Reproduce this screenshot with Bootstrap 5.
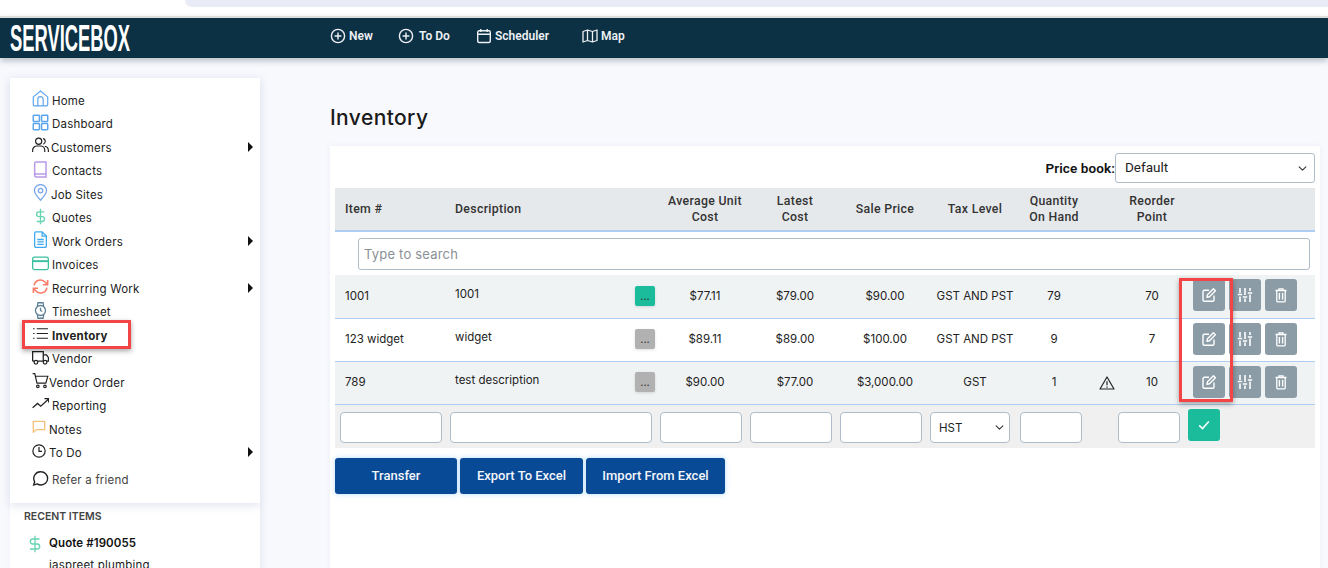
<!doctype html>
<html lang="en">
<head>
<meta charset="utf-8">
<title>Inventory</title>
<link href="https://cdn.jsdelivr.net/npm/bootstrap@5.3.0/dist/css/bootstrap.min.css" rel="stylesheet">
<style>
html,body{height:568px;overflow:hidden}
body{background:#f8f9fd;font-family:Inter,"Noto Sans",sans-serif;color:#222;font-size:11.5px}
.top-strip{height:16px;background:#fff;overflow:hidden}
.top-bubble{height:7px;margin-left:185px;background:#e9ecf6;border-bottom-left-radius:22px}
.sb-nav{height:42px;background:#0c3044;border-top:2px solid #dcdedb;padding:0;box-shadow:0 3px 6px rgba(40,60,80,.3);flex-wrap:nowrap;justify-content:flex-start}
.sb-logo{width:320px;padding:1px 0 0 10px;color:#fff;font:700 36px/40px "Liberation Sans",sans-serif;height:40px;flex:none}
.sb-logo span{display:inline-block;transform:scaleX(.51);transform-origin:left center}
.top-link{display:flex;align-items:center;gap:3px;color:#eef2f4;font:600 12px/16px Roboto,sans-serif;text-decoration:none;position:absolute;top:10px}
.top-link svg{width:16px;height:16px}
.gap-wide{margin-left:2px}
.shell{display:flex;align-items:flex-start}
.side-wrap{width:250px;margin:20px 0 0 10px;flex:none;position:relative}
.side-menu{background:#fff;padding:11.5px 0 11px 22px;box-shadow:0 2px 9px rgba(90,100,170,.2);height:425px;position:relative;z-index:1}
.side-item{display:flex;align-items:center;height:23.5px;color:#222;text-decoration:none;position:relative;gap:3px;font-size:11.5px;letter-spacing:.2px}
.side-item svg.ic{width:17px;height:17px;flex:none;margin-top:-5px}
.side-item svg.ic.small-ic{width:14px;height:14px;margin-top:-6px}
.side-item .caret-r{position:absolute;left:216px;top:5px;width:0;height:0;border-left:5px solid #111;border-top:5px solid transparent;border-bottom:5px solid transparent}
.side-item b{font-weight:700}
.tight{margin-left:-3px}
.tight1{margin-left:-1px}
.refer{margin-top:3.5px;color:#444}
.recent{background:#fff;padding:7px 0 0 14px;height:80px;box-shadow:2px 0 6px rgba(90,100,170,.1)}
.recent h6{font-size:10.5px;font-weight:600;color:#444;margin:0 0 13px;line-height:13px}
.recent-line{display:flex;gap:7px;align-items:center;font-weight:600;font-size:11.5px;color:#111;letter-spacing:.1px;padding-left:4px;height:16px}
.recent-line svg{width:14px;height:18px;flex:none}
.recent-sub{padding-left:25px;margin-top:6px;font-size:11.5px;line-height:14px;letter-spacing:.2px}
.hl{position:absolute;border:3px solid #f34545;box-shadow:0 2px 5px rgba(0,0,0,.35);pointer-events:none;z-index:2}
.hl-side{left:12px;top:242px;width:109px;height:29px}
.hl-tbl{left:849px;top:132px;width:54px;height:124px}
.main{margin-left:70px;width:990px;flex:none}
.page-title{font-size:21px;font-weight:500;line-height:26px;margin:47px 0 15px;color:#1a1a1a;letter-spacing:.4px}
.panel{background:#fff;padding:7px 5px 0;height:430px;position:relative;box-shadow:0 0 5px rgba(90,100,160,.08)}
.price-row{display:flex;justify-content:flex-end;align-items:center;height:30px;margin-bottom:5px}
.price-row label{font:600 13.5px Roboto,sans-serif;color:#111;letter-spacing:.1px}
.price-row .form-select{width:200px;height:30px;padding:0 0 2px 9px;font:400 13.5px Roboto,sans-serif;border-color:#aebdc9;border-radius:3px;color:#222;background-position:right 6px center;background-size:11px 9px}
.inv-table{table-layout:fixed;width:980px;margin:0;border-collapse:collapse;font-size:11.5px}
.inv-table th{background:#e6e9ec;font:500 12.3px/16px Roboto,sans-serif;letter-spacing:.32px;color:#333;text-align:center;vertical-align:middle;height:43px;padding:0;border-bottom:2px solid #afcdf0}
.inv-table th.lft,.inv-table td.lft{text-align:left;padding-left:10px}
.inv-table td{padding:0;height:43px;vertical-align:middle;text-align:center;color:#222;border-bottom:1px solid #afcdf0}
.inv-table td.up span{position:relative;top:-2px}
.inv-table tr.odd td{background:#f0f3f4}
.inv-table tr.search td{height:44px;border:0;text-align:left;padding-left:23px;background:#fff}
.inv-table tr.add td{background:#f0f0f0;border:0;height:44px;text-align:left;padding-top:3px}
.search-box{width:952px;height:32px;border:1px solid #aebdc9;border-radius:3px;padding:0 5px;font-size:13px;font-family:Inter,sans-serif;letter-spacing:.2px}
.search-box::placeholder{color:#8a8f94}
.add-in{height:31px;border:1px solid #aebdc9;border-radius:4px;background:#fff;padding:0 8px;display:block}
.add-first{margin-left:5px}
.add-sel{width:80px;height:31px;border:1px solid #aebdc9;border-radius:4px;padding:2px 0 0 8px;font-size:11.5px;background-position:right 4px center;background-size:11px 9px;color:#222;font-family:Inter,sans-serif}
.dots{width:20px;height:20px;border:0;padding:0;border-radius:2px;background:#b1b1b1;font-size:11px;line-height:18px;color:#333;box-shadow:0 1px 3px rgba(0,0,0,.12);display:block;margin:-1px 0 0 10px}
.dots.on{background:#1abc9c}
.act{display:flex;gap:4px;padding-left:7px;margin-top:-2px}
.act-btn{width:32px;height:32px;border:0;border-radius:3px;background:#8b9ca6;padding:0;display:flex;align-items:center;justify-content:center}
.act-btn svg{width:16px;height:16px}
.ok-btn{width:32px;height:32px;border:0;border-radius:3px;background:#1abc9c;margin:-5px 0 0 2px;display:flex;align-items:center;justify-content:center;padding:0}
.bottom-btns{display:flex;gap:3px;margin-top:10px}
.blue-btn{background:#084a96;border:0;border-radius:3px;color:#f2f5fa;font:500 13px/36px Roboto,sans-serif;height:36px;padding:0;box-shadow:0 0 5px rgba(70,160,240,.4)}
.warn{display:block;width:16px;height:16px;margin-left:11px}
</style>
</head>
<body>
<svg width="0" height="0" class="position-absolute">
<defs>
<symbol id="plus" viewBox="0 0 16 16"><circle cx="8" cy="8" r="6.6" fill="none" stroke="currentColor" stroke-width="1.4"/><path d="M8 4.6v6.8M4.6 8h6.800" stroke="currentColor" stroke-width="1.4"/></symbol>
<symbol id="edit" viewBox="0 0 16 16"><path d="M13 8.5V13a1.3 1.3 0 0 1-1.3 1.3H3.3A1.3 1.3 0 0 1 2 13V4.6a1.3 1.3 0 0 1 1.3-1.3H8" fill="none" stroke="#fff" stroke-width="1.4"/><path d="M6 10.3l.5-2.6L12.4 1.8l2 2-5.900 5.900z" fill="none" stroke="#fff" stroke-width="1.4" stroke-linejoin="round"/></symbol>
<symbol id="sliders" viewBox="0 0 16 16"><path d="M3 1v5M3 9.5V15M8 1v7M8 11.500V15M13 1v3M13 7.500V15M.8 7.500h4.400M5.800 10h4.400M10.800 6h4.400" stroke="#fff" stroke-width="1.6" fill="none"/></symbol>
<symbol id="trash" viewBox="0 0 16 16"><path d="M2.500 3.500h11M6 3.500V1.800h4v1.700M3.800 3.500v10.200a1.200 1.200 0 0 0 1.200 1.200h6a1.200 1.200 0 0 0 1.200-1.200V3.500" fill="none" stroke="#fff" stroke-width="1.3"/><path d="M6.400 6v6.500M9.600 6v6.500" stroke="#fff" stroke-width="1.400"/></symbol>
</defs>
</svg>

<div class="top-strip"><div class="top-bubble"></div></div>
<nav class="navbar sb-nav">
  <div class="sb-logo"><span>SERVICEBOX</span></div>
  <a class="top-link" href="#" style="left:330px"><svg><use href="#plus"/></svg>New</a>
  <a class="top-link" href="#" style="left:398px"><svg><use href="#plus"/></svg><span class="gap-wide">To Do</span></a>
  <a class="top-link" href="#" style="left:476px"><svg viewBox="0 0 16 16" fill="none" stroke="currentColor" stroke-width="1.400"><rect x="1.700" y="2.800" width="12.600" height="11.700" rx="1.500"/><path d="M1.700 6.300h12.600M4.800 1v3M11.200 1v3"/></svg>Scheduler</a>
  <a class="top-link" href="#" style="left:582px"><svg viewBox="0 0 16 16" fill="none" stroke="currentColor" stroke-width="1.300" stroke-linejoin="round"><path d="M1 3.500l4.500-1.500 5 1.500L15 2v10.500L10.500 14l-5-1.500L1 14zM5.500 2v10.500M10.500 3.500V14"/></svg>Map</a>
</nav>

<div class="shell">
  <aside class="side-wrap">
    <div class="side-menu">
      <a class="side-item" href="#"><svg class="ic" viewBox="0 0 16 16" fill="none" stroke="#5ba4ee" stroke-width="1.100"><path d="M1.200 6.500L8 1l6.800 5.500v7.200a1.300 1.300 0 0 1-1.300 1.300h-11a1.300 1.300 0 0 1-1.300-1.300z"/><path d="M5.500 15V8.700a2.500 2.500 0 0 1 5 0V15"/></svg>Home</a>
      <a class="side-item" href="#"><svg class="ic" viewBox="0 0 16 16" fill="none" stroke="#5ba4ee" stroke-width="1.400"><rect x="1.200" y="1.200" width="5.800" height="5.800" rx=".6"/><rect x="9" y="1.200" width="5.800" height="5.800" rx=".6"/><rect x="1.200" y="9" width="5.800" height="5.800" rx=".6"/><rect x="9" y="9" width="5.800" height="5.800" rx=".6"/></svg>Dashboard</a>
      <a class="side-item" href="#"><svg class="ic" viewBox="0 0 16 16" fill="none" stroke="#222" stroke-width="1.100"><circle cx="6.300" cy="4" r="2.900"/><path d="M.6 14v-1.500A4 4 0 0 1 4.600 8.500h3.400a4 4 0 0 1 4 4V14M10.500 1.300a2.900 2.900 0 0 1 0 5.500M12 8.700a4 4 0 0 1 3.400 3.800V14"/></svg><span class="tight1">Customers</span><i class="caret-r"></i></a>
      <a class="side-item" href="#"><svg class="ic" viewBox="0 0 16 16" fill="none" stroke="#b79be6" stroke-width="1.400"><path d="M2.500 13.300V2.300A1.300 1.300 0 0 1 3.800 1h9.400v14H3.800a1.300 1.300 0 0 1-1.300-1.300 1.500 1.500 0 0 1 1.300-1.500h9.400"/></svg>Contacts</a>
      <a class="side-item" href="#"><svg class="ic" viewBox="0 0 16 16" fill="none" stroke="#7aa7ec" stroke-width="1.200"><path d="M8 15.300C4.500 11.500 2.300 8.800 2.300 6.200a5.700 5.700 0 0 1 11.400 0c0 2.600-2.200 5.300-5.700 9.100z"/><circle cx="8" cy="6.200" r="2.100"/></svg><span class="tight1">Job Sites</span></a>
      <a class="side-item" href="#"><svg class="ic" viewBox="0 0 16 16" fill="none" stroke="#69d3b2" stroke-width="1.300"><path d="M8 .7v14.600M11.500 3.700H6.500a2.200 2.200 0 0 0 0 4.400h3a2.300 2.300 0 0 1 0 4.600H4.500"/></svg>Quotes</a>
      <a class="side-item" href="#"><svg class="ic" viewBox="0 0 16 16" fill="none" stroke="#3ea9ee" stroke-width="1.200"><path d="M2.500 2A1.200 1.200 0 0 1 3.700.8h5.800l4 4v9.400a1.200 1.200 0 0 1-1.200 1.200H3.700a1.200 1.200 0 0 1-1.200-1.200zM9.500.8v4h4M5 8h6M5 10.300h6M5 12.600h6"/></svg>Work Orders<i class="caret-r"></i></a>
      <a class="side-item" href="#"><svg class="ic" viewBox="0 0 16 16" fill="none" stroke="#3bbf9f" stroke-width="1.200"><rect x=".6" y="2" width="14.800" height="11.700" rx="1.700"/><path d="M.6 5.800h14.800" stroke-width="1.800"/></svg>Invoices</a>
      <a class="side-item" href="#"><svg class="ic" viewBox="0 0 16 16" fill="none" stroke="#fb7d68" stroke-width="1.500"><path d="M2 7a6 6 0 0 1 10.500-3l2 2M14 9a6 6 0 0 1-10.500 3l-2-2M14.700 1.800v4.500h-4.500M1.300 14.200V9.700h4.500"/></svg>Recurring Work<i class="caret-r"></i></a>
      <a class="side-item" href="#"><svg class="ic" viewBox="0 0 16 16" fill="none" stroke="#5d7f95" stroke-width="1.200"><circle cx="8" cy="8" r="4.700"/><path d="M8 5.500V8l1.600 1M5 4l.6-3.300h4.800L11 4M5 12l.6 3.300h4.800L11 12"/></svg>Timesheet</a>
      <a class="side-item" href="#"><svg class="ic" viewBox="0 0 16 16" fill="none" stroke="#222" stroke-width="1.100"><path d="M4.500 3.500H15M4.500 8H15M4.500 12.500H15M1 3.500h1.400M1 8h1.400M1 12.500h1.400"/></svg><b>Inventory</b></a>
      <a class="side-item" href="#"><svg class="ic" viewBox="0 0 16 16" fill="none" stroke="#222" stroke-width="1.200"><path d="M.6 11.500V2.500h10v9M10.600 5.500h3l1.900 2.600v3.400h-1.500M.6 11.500h1.300M5.500 11.500h5.500"/><circle cx="3.700" cy="12.500" r="1.700"/><circle cx="12.300" cy="12.500" r="1.700"/></svg>Vendor</a>
      <a class="side-item" href="#"><svg class="ic" viewBox="0 0 16 16" fill="none" stroke="#222" stroke-width="1.100"><path d="M.6 1.500h2l2.100 9h8.300l1.900-6.500H3.300"/><circle cx="5.500" cy="13.500" r="1.200"/><circle cx="12.200" cy="13.500" r="1.200"/></svg><span class="tight">Vendor Order</span></a>
      <a class="side-item" href="#"><svg class="ic" viewBox="0 0 16 16" fill="none" stroke="#222" stroke-width="1.200"><path d="M.6 11l4.600-4 3 2.600 7-6.300M11.700 2.500h4v3.500"/></svg>Reporting</a>
      <a class="side-item" href="#"><svg class="ic small-ic" viewBox="0 0 16 16" fill="none" stroke="#f5c07a" stroke-width="1.500"><path d="M1.500 1.500h13v9.500H5l-3.500 3z" stroke-linejoin="round"/></svg>Notes</a>
      <a class="side-item" href="#"><svg class="ic small-ic" viewBox="0 0 16 16" fill="none" stroke="#222" stroke-width="1.400"><circle cx="8" cy="8" r="7"/><path d="M8 3.500V8.500H11.500"/></svg>To Do<i class="caret-r"></i></a>
      <a class="side-item refer" href="#"><svg class="ic" viewBox="0 0 16 16" fill="none" stroke="#222" stroke-width="1.300"><path d="M8.500 1.700a6.200 6.200 0 0 1 0 12.400c-1.500 0-2.600-.3-3.600-1l-3.300 1 .9-3a6.300 6.300 0 0 1 6-9.400z"/></svg>Refer a friend</a>
    </div>
    <div class="recent">
      <h6>RECENT ITEMS</h6>
      <div class="recent-line"><svg viewBox="0 0 12 18" fill="none" stroke="#69d3b2" stroke-width="1.300"><path d="M6 .7v16.600M10.500 4H3.800a2.500 2.500 0 0 0 0 5h4.400a2.500 2.500 0 0 1 0 5H1"/></svg>Quote #190055</div>
      <div class="recent-sub">jaspreet plumbing</div>
    </div>
    <div class="hl hl-side"></div>
  </aside>

  <main class="main">
    <h1 class="page-title">Inventory</h1>
    <section class="panel">
      <div class="price-row"><label for="pb">Price book:</label><select id="pb" class="form-select"><option>Default</option></select></div>
      <table class="inv-table">
        <colgroup><col style="width:110px"><col style="width:180px"><col style="width:35px"><col style="width:90px"><col style="width:90px"><col style="width:90px"><col style="width:90px"><col style="width:68px"><col style="width:30px"><col style="width:68px"><col style="width:129px"></colgroup>
        <thead><tr><th class="lft">Item #</th><th class="lft">Description</th><th></th><th>Average Unit<br>Cost</th><th>Latest<br>Cost</th><th>Sale Price</th><th>Tax Level</th><th>Quantity<br>On Hand</th><th></th><th>Reorder<br>Point</th><th></th></tr></thead>
        <tbody>
          <tr class="search"><td colspan="11"><input class="search-box" placeholder="Type to search"></td></tr>
          <tr class="odd"><td class="lft">1001</td><td class="lft up"><span>1001</span></td><td><button class="dots on">...</button></td><td>$77.11</td><td>$79.00</td><td>$90.00</td><td>GST AND PST</td><td>79</td><td></td><td>70</td><td><div class="act"><button class="act-btn"><svg><use href="#edit"/></svg></button><button class="act-btn"><svg><use href="#sliders"/></svg></button><button class="act-btn"><svg><use href="#trash"/></svg></button></div></td></tr>
          <tr><td class="lft">123 widget</td><td class="lft up"><span>widget</span></td><td><button class="dots">...</button></td><td>$89.11</td><td>$89.00</td><td>$100.00</td><td>GST AND PST</td><td>9</td><td></td><td>7</td><td><div class="act"><button class="act-btn"><svg><use href="#edit"/></svg></button><button class="act-btn"><svg><use href="#sliders"/></svg></button><button class="act-btn"><svg><use href="#trash"/></svg></button></div></td></tr>
          <tr class="odd"><td class="lft">789</td><td class="lft up"><span>test description</span></td><td><button class="dots">...</button></td><td>$90.00</td><td>$77.00</td><td>$3,000.00</td><td>GST</td><td>1</td><td><svg class="warn" viewBox="0 0 16 16" fill="none" stroke="#222" stroke-width="1.200"><path d="M8 2L1 14h14z" stroke-linejoin="round"/><path d="M8 6.300v4M8 11.500v1.200"/></svg></td><td>10</td><td><div class="act"><button class="act-btn"><svg><use href="#edit"/></svg></button><button class="act-btn"><svg><use href="#sliders"/></svg></button><button class="act-btn"><svg><use href="#trash"/></svg></button></div></td></tr>
          <tr class="add">
            <td><input class="add-in add-first" style="width:102px"></td>
            <td colspan="2"><input class="add-in add-first" style="width:202px"></td>
            <td><input class="add-in" style="width:82px"></td>
            <td><input class="add-in" style="width:82px"></td>
            <td><input class="add-in" style="width:82px"></td>
            <td><select class="form-select add-sel"><option>HST</option></select></td>
            <td><input class="add-in" style="width:62px"></td>
            <td></td>
            <td><input class="add-in" style="width:62px"></td>
            <td><button class="ok-btn"><svg width="14" height="14" viewBox="0 0 16 16" fill="none" stroke="#fff" stroke-width="1.800"><path d="M2.500 8.500l3.800 3.600 7.200-8"/></svg></button></td>
          </tr>
        </tbody>
      </table>
      <div class="bottom-btns"><button class="blue-btn" style="width:122px">Transfer</button><button class="blue-btn" style="width:123px">Export To Excel</button><button class="blue-btn" style="width:139px">Import From Excel</button></div>
      <div class="hl hl-tbl"></div>
    </section>
  </main>
</div>
</body>
</html>
